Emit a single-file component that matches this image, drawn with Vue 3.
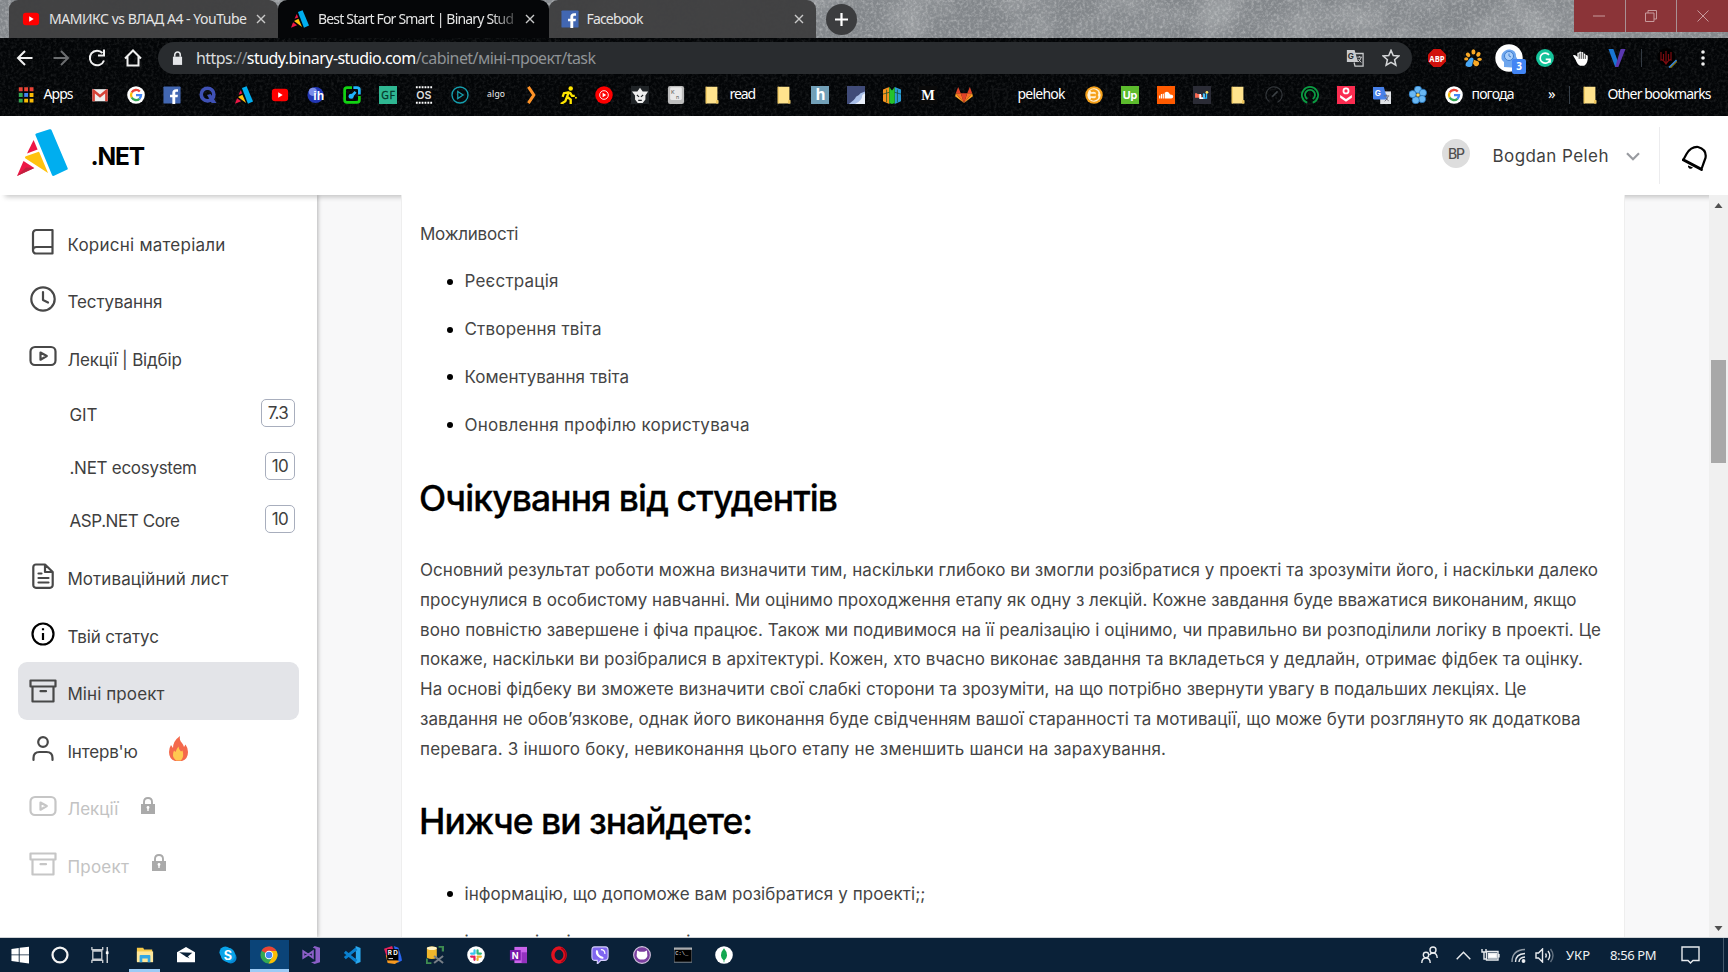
<script setup>
// Spreads letter spacing so that a run of text fills the given width.
const vFit = {
  mounted(el, { value }) {
    el.style.letterSpacing = '0px'
    const n = el.textContent.length
    const w = el.getBoundingClientRect().width
    el.style.letterSpacing = (value - w) / Math.max(n - 1, 1) + 'px'
  },
}

const google = `<circle cx="10" cy="10" r="9.800" fill="#fff"/><g fill="none" stroke-width="2.600"><path d="M14.200 6.200A5.600 5.600 0 0 0 5.200 7.200" stroke="#ea4335"/><path d="M5.200 7.200a5.600 5.600 0 0 0 0 5.600" stroke="#fbbc05"/><path d="M5.200 12.800a5.600 5.600 0 0 0 8.600 1.400" stroke="#34a853"/><path d="M13.800 14.200a5.600 5.600 0 0 0 1.800-4.100H10" stroke="#4285f4"/></g>`
const youtube = `<rect x="1" y="3" width="18" height="14" rx="3.400" fill="#f00"/><path d="M8 7l5 3-5 3z" fill="#fff"/>`
const facebook = `<rect x="0.5" y="0.5" width="19" height="19" rx="1" fill="#4267b2"/><path d="M13.600 20v-7.400h2.600l.4-3h-3V7.900c0-.9.4-1.400 1.500-1.400h1.600V3.700c-.5-.1-1.300-.2-2.200-.2-2.500 0-4.100 1.400-4.100 4v2.100H7.800v3h2.600V20z" fill="#fff"/>`
const binary = `<path d="M7.700 2.200 12.900.2 20 17.300 14.400 19.700z" fill="#00aeef"/><path d="M6.400 4.400 8 8.300 4 9.600z" fill="#ed1846"/><path d="M3.400 12.100 8.300 9.800 12.300 18.800z" fill="#ffc20e"/><path d="M2.300 13.700 6.800 16.900 0 19.800z" fill="#ed1846"/>`
const folder = `<path d="M3 .8h13v15h1v3.600H3z" fill="#ffe38d"/><path d="M3 .8h1.200v18.600H3zM14.500 15.800h2.500v3.600h-2.500z" fill="#efc65c"/>`

const icons = {
  google, youtube, facebook, binary, folder,
  apps: `<path d="M2 1.500h4.300v4.300H2zM8 1.500h4.300v4.300H8zM14 1.500h4.300v4.300H14z" fill="#ea4335"/><path d="M2 7.800h4.300v4.300H2zM2 14.100h4.300v4.300H2z" fill="#34a853"/><path d="M8 7.800h4.300v4.300H8z" fill="#4285f4"/><path d="M14 7.800h4.300v4.300H14zM8 14.100h4.300v4.300H8zM14 14.100h4.300v4.300H14z" fill="#fbbc05"/>`,
  gmail: `<path d="M1.500 3.500h17v13.500h-17z" fill="#eee"/><path d="M1.500 17V3.500h1.500l7 6 7-6h1.500V17h-2.800V8.200L10 13 4.300 8.200V17z" fill="#d54338"/>`,
  q: `<circle cx="9.500" cy="9.500" r="7" fill="none" stroke="#3f51b5" stroke-width="4"/><path d="M9 10l4-1 6.500 10H14z" fill="#3f51b5"/>`,
  ih: `<circle cx="9.500" cy="10" r="9" fill="#2338b5"/><circle cx="6.500" cy="6.500" r="4.500" fill="#9fb0ff" opacity=".7"/><text x="7" y="15" font-family="Liberation Sans" font-weight="700" font-size="13.500" fill="#fff" textLength="12">ih</text>`,
  edit: `<path d="M10 1.800H4.500Q1.800 1.800 1.800 4.500v11q0 2.700 2.700 2.700h11q2.700 0 2.700-2.700V11" fill="none" stroke="#12d312" stroke-width="3"/><path d="M11.500 1.800h4q2.700 0 2.700 2.700v5M8.500 12.500 14 6.500" fill="none" stroke="#21b4ff" stroke-width="3"/><circle cx="9" cy="11.500" r="2.800" fill="#21b4ff"/>`,
  gf: `<rect width="20" height="20" fill="#2fb792"/><text x="2.500" y="14.200" font-family="Open Sans" font-size="11.500" fill="#06382c" stroke="#06382c" stroke-width=".4" textLength="15">GF</text>`,
  os: `<path d="M1 1.500h18M1 18.500h18" stroke="#fff" stroke-width="2.200" stroke-dasharray="2 1.200"/><text x="1.500" y="14.300" font-family="Inter" font-weight="600" font-size="11.500" fill="#ddd" textLength="17" lengthAdjust="spacingAndGlyphs">OS</text>`,
  play: `<circle cx="10" cy="10" r="8.900" fill="none" stroke="#169fae" stroke-width="1.500"/><path d="M7.500 6l6 4-6 4z" fill="none" stroke="#169fae" stroke-width="1.400"/>`,
  algo: `<text x="0" y="12" font-family="Noto Sans" font-size="9.500" fill="#eee" textLength="20">algo</text>`,
  angle: `<path d="M6 1l6 9-6 9" fill="none" stroke="#ff9327" stroke-width="3.400"/>`,
  walk: `<rect width="20" height="20" fill="#060606"/><circle cx="13" cy="2.800" r="2.500" fill="#ffe600"/><path d="M11 6 9 12l4 3v5M9 12l-2 5-5 3M10.500 7l-5 1-1.500 4M12 7l2.500 4h3" fill="none" stroke="#ffe600" stroke-width="2.600"/><circle cx="18.800" cy="13" r="1.100" fill="#ffe600"/>`,
  ytm: `<circle cx="10" cy="10" r="9.700" fill="#f00"/><circle cx="10" cy="10" r="4.800" fill="none" stroke="#fff" stroke-width="1"/><path d="M8.500 7.500l4 2.500-4 2.500z" fill="#fff"/>`,
  goat: `<rect width="20" height="20" fill="#202427"/><path d="M1 6l6 0 3-4 3 4 6 0-3 4.500v4.500l-3 4H7.500l-3-4v-4.500z" fill="#eee"/><path d="M6.500 10l2.500 2M13.500 10 11 12M8 16h4" stroke="#202427" stroke-width="1.200"/>`,
  key: `<rect x="1" y="0" width="18" height="20" rx="2.500" fill="#bdbdbd"/><rect x="3.500" y="1.500" width="13" height="14" rx="1.500" fill="#e9e9e9"/><text x="4.500" y="8.500" font-family="Inter" font-size="6" fill="#555">K</text><text x="10" y="14" font-family="Inter" font-size="6" fill="#555">n</text>`,
  h: `<rect width="20" height="20" fill="#72a0b8"/><text x="5" y="16" font-family="Open Sans" font-weight="700" font-size="17" fill="#fff">h</text>`,
  wave: `<rect width="20" height="20" fill="#404b78"/><path d="M2 20q7-5 8-8 3-1 5-4l5-2v14z" fill="#a9bfe8"/><path d="M9 20q8-4 8-10l3-2v12z" fill="#e9effa"/>`,
  shirt: `<path d="M7 1 0 4v13l7 3z" fill="#f7941d"/><path d="M13 1l7 3v13l-7 3z" fill="#2a9bd7"/><path d="M7 1l3 4 3-4v18l-3 1-3-1z" fill="#25c32b"/><path d="M0 9l7-2M13 7l7 2M4 4v14M16 4v14" stroke="#174a2b" stroke-width=".8"/>`,
  m: `<rect width="20" height="20" fill="#0a0a0a"/><text x="2.500" y="15.500" font-family="Liberation Serif" font-weight="700" font-size="16" fill="#fff">M</text>`,
  gitlab: `<path d="M10 19 6.400 8h7.200z" fill="#e24329"/><path d="M10 19 6.400 8H.9zM10 19l3.600-11h5.500z" fill="#fc6d26"/><path d="M.9 8l-.8 3.500L10 19zM19.100 8l.8 3.500L10 19z" fill="#fca326"/><path d="M.9 8 3.500 1l2.900 7zM19.100 8l-2.600-7-2.900 7z" fill="#e24329"/>`,
  github: `<path d="M6 18C0 15 1 4 5 3l2 1h6l2-1c4 2 5 12-1 15" fill="none" stroke="#111315" stroke-width="2"/>`,
  coin: `<circle cx="10" cy="10" r="9.700" fill="#f6a11b"/><circle cx="10" cy="10" r="7.400" fill="#fff3d8"/><path d="M6.500 6q3-2 6 0 2 2 0 4 2 2 0 4-3 2-6 0M6 10h5" fill="none" stroke="#f6a11b" stroke-width="2.600"/>`,
  up: `<rect width="20" height="20" fill="#5cbb2d"/><text x="2" y="14" font-family="Inter" font-weight="700" font-size="12" fill="#fff" textLength="16">Up</text>`,
  cloud: `<rect width="20" height="20" fill="#ff5a00"/><path d="M8.500 14V7.500q4-3 6 2 3.500 0 3.500 2.300T15.500 14z" fill="#fff"/><path d="M7 8.500V14M5 9v5M3 10.500V14" stroke="#fff" stroke-width="1.300"/>`,
  w: `<rect width="20" height="20" fill="#2b2c36"/><path d="M3.500 8v5M6 9v4M8.500 10v3" stroke="#ff6c54" stroke-width="2.400"/><path d="M8 9v4.500h4V9" stroke="#fff" stroke-width="2" fill="none"/><path d="M12 8v5.500h3V7" stroke="#26b9ff" stroke-width="1.500" fill="none"/><circle cx="15.500" cy="7" r="1.500" fill="#ffe15c"/>`,
  gauge: `<circle cx="10" cy="10" r="9" fill="none" stroke="#32363a" stroke-width="1.300" stroke-dasharray="46 12" transform="rotate(130 10 10)"/><path d="M8 12l6-6" stroke="#3d4246" stroke-width="1.800"/>`,
  rings: `<path d="M7 18.500A9 9 0 1 1 13 18.500M7 14.500a5.500 5.500 0 1 1 6 0" fill="none" stroke="#0b9a42" stroke-width="2"/>`,
  heart: `<rect width="20" height="20" fill="#fb2c50"/><circle cx="10" cy="5.500" r="2.800" fill="none" stroke="#fff" stroke-width="2"/><path d="M3.500 10l6.500 4.500 6.500-4.500v3L10 17.500 3.500 13z" fill="#fff"/>`,
  trans: `<rect x="8" y="6" width="12" height="14" fill="#dfe2e6"/><path d="M0 1h12l4 14H1.500Q0 15 0 13.500z" fill="#4680e8"/><text x="2" y="11" font-family="Inter" font-weight="700" font-size="9" fill="#fff">G</text><path d="M12 11h6M15 9.500v2M17 11q-1 4-4 6M14 13q1 2 3.500 3.500" stroke="#667" fill="none"/>`,
  flower: `<g fill="#69b8f4" stroke="#226eb5" stroke-width=".8"><circle cx="10" cy="4" r="4"/><circle cx="15.500" cy="7.500" r="4"/><circle cx="14.500" cy="14.500" r="4"/><circle cx="7.500" cy="15.800" r="4"/><circle cx="4" cy="9" r="4"/></g><circle cx="10" cy="10" r="2" fill="#ffd65b"/>`,
  abp: `<path d="M6 0h8l6 6v8l-6 6H6l-6-6V6z" fill="#d1110c"/><text x="1.500" y="14" font-family="Open Sans" font-weight="700" font-size="10.500" fill="#fff" textLength="17" lengthAdjust="spacingAndGlyphs">ABP</text>`,
  paw: `<g fill="#f9a825"><ellipse cx="10.500" cy="3.200" rx="2.200" ry="3"/><ellipse cx="16" cy="6" rx="2.200" ry="2.800" transform="rotate(35 16 6)"/><ellipse cx="17.300" cy="11.500" rx="2.600" ry="1.800"/><ellipse cx="4.500" cy="6.500" rx="2.200" ry="2.800" transform="rotate(-40 4.500 6.500)"/><path d="M11 12l5 2q2 3-1 5-3 1-5-3z"/><ellipse cx="2.500" cy="11" rx="2.300" ry="1.700"/></g><path d="M8 9.500q4 0 2 4l-1 5q-3 3-7 0-1-3 2-5 2-3 4-4z" fill="#47a6f5"/>`,
  gram: `<circle cx="10" cy="10" r="9.900" fill="#15c39a"/><path d="M14.500 6.500A5.600 5.600 0 1 0 15.300 12.500M10.800 11.500h4.700v3.800" fill="none" stroke="#fff" stroke-width="1.900"/>`,
  hand: `<path d="M1 7q3-1 5 2V4.500q1-1.500 2 0V3.500q1-1.500 2.300 0V4q1-1.500 2.300 0v1.500q1-1.200 2.200 0V7q1.500-1 2.700.500v4q-1 6-4 7H9q-3-1-5-6.500z" fill="#fff"/><path d="M8 5v6M10.300 4v7M12.600 5v6M14.800 7v4" stroke="#222" stroke-width=".9"/>`,
  v: `<path d="M.5 0h5.500l5 14-1.500 6H8z" fill="#1976d2"/><path d="M19.500 0H14L8 20h3.500z" fill="#5a38b0"/>`,
  trident: `<circle cx="9.500" cy="9" r="9" fill="#000"/><path d="M4 4v8q2-1 5 4 3-5 5-4V4M6.500 6v6M11.500 6v6M9 3v13" fill="none" stroke="#7d0b10" stroke-width="1.200"/><path d="M12 19.500 19.500 12" stroke="#3d8be0" stroke-width="1.400"/><path d="M13.200 20.200 20.400 13" stroke="#e0c21b" stroke-width=".9"/>`,
  gtrans: `<path d="M9 5h10v14H10l-1-4" fill="none" stroke="#c8cacc" stroke-width="1.400"/><path d="M1 1h8.500l4 13.500H1z" fill="#c8cacc"/><text x="2" y="11" font-family="Inter" font-weight="700" font-size="9" fill="#292c2f">G</text><path d="M12.500 9h5M15 8v1M17 9q-1 3.500-3.500 5.500M14 11q1 2 3 4" stroke="#c8cacc" fill="none" stroke-width="1.100"/>`,
  star: `<path d="M10 1.500l2.500 5.800 6.200.500-4.700 4.100 1.400 6.100-5.400-3.200L4.600 18 6 11.900 1.300 7.800l6.200-.500z" fill="none" stroke="#d4d6d8" stroke-width="1.700"/>`,
  // taskbar
  win: `<path d="M.5 3.300 8.600 2.200v7.200H.5zM9.600 2 20 .7v8.700H9.600zM.5 10.400h8.100v7.300L.5 16.700zM9.600 10.400H20v9L9.600 18z" fill="#fff"/>`,
  cortana: `<circle cx="10" cy="10" r="8.300" fill="none" stroke="#f4f4f4" stroke-width="2.500"/>`,
  view: `<path d="M1 1v3h12V1M1 19v-3h12v3M2 5.500h10v9H2z" fill="none" stroke="#c7ccd1" stroke-width="1.500"/><path d="M18 1v18" stroke="#fff" stroke-width="1.300"/><path d="M16.500 6h3v3h-3z" fill="#fff"/>`,
  files: `<path d="M1 2h7l1 2h9v13H1z" fill="#f7c948"/><path d="M1 6h18v12H1z" fill="#ffe79a"/><path d="M4 18v-7q0-1 1-1h10q1 0 1 1v7h-3v-4H7v4z" fill="#35a7e3"/>`,
  mail: `<path d="M0 7 10 1l10 6v11H0z" fill="#fff"/><path d="M2.500 7l14.500.500-6 5z" fill="#0a2138"/><path d="M9 11l5 3-3-4" fill="#0a2138"/>`,
  skype: `<circle cx="7" cy="7" r="6.500" fill="#0aa3e8"/><circle cx="13" cy="13" r="6.500" fill="#0686d2"/><circle cx="10" cy="10" r="8" fill="#0aa3e8"/><text x="5.300" y="15.300" font-family="Inter" font-weight="700" font-size="14" fill="#fff">S</text>`,
  chrome: `<circle cx="10" cy="10" r="9.500" fill="#34a853"/><path d="M10 10 1.800 5.200A9.500 9.500 0 0 1 18.300 5.500z" fill="#ea4335"/><path d="M10 5.500h8.300A9.500 9.500 0 0 1 9.500 19.500L14 12z" fill="#fbbc05"/><circle cx="10" cy="10" r="4.600" fill="#fff"/><circle cx="10" cy="10" r="3.600" fill="#4285f4"/>`,
  vs: `<path d="M14 0l6 2v16l-6 2-4-2 5-1V3l-3-1z" fill="#8b5fc7"/><path d="M1.500 6v7l5.500-3.500 5 3.500V6L7 9.500z" fill="none" stroke="#8b5fc7" stroke-width="2.200"/>`,
  code: `<path d="M14 0l5.500 2.300v15.400L14 20z" fill="#2aa8ee"/><path d="M15 3 2 13.500M15 17 2 6.500" stroke="#0a80cf" stroke-width="3.400"/><path d="M14 6v8L9 10z" fill="#0a2138"/>`,
  rider: `<path d="M0 3 9 0l3 9-8 6z" fill="#e6245c"/><path d="M11 0l5 2 3 9 1 5-5 3z" fill="#2866f2"/><path d="M2 10l2 9 8 1 5-3z" fill="#f79a20"/><rect x="3.500" y="3.500" width="12.500" height="12.500" fill="#000"/><text x="4.300" y="10.500" font-family="Inter" font-weight="700" font-size="7" fill="#fff" textLength="11">RD</text><path d="M5 14h5" stroke="#fff"/>`,
  sql: `<path d="M14 0h6v6h-2.500V2H14zM0 14h2v4h4v2H0z" fill="#3e8c50"/><path d="M1 2q5.500-3 11 0v11q-5.500 3-11 0z" fill="#f1b72c"/><ellipse cx="6.500" cy="2.500" rx="5.500" ry="2" fill="#fff3c5"/><path d="M9 11l10 8M19 11 9 19" stroke="#777e86" stroke-width="2.200"/>`,
  slack: `<circle cx="10" cy="10" r="9.800" fill="#fff"/><g stroke-width="2.500" stroke-linecap="round"><path d="M8.400 4.800v3.500M4.600 8.400h3.700" stroke="#36c5f0"/><path d="M11.700 4.800v3.500M11.700 8.400h3.700" stroke="#2eb67d"/><path d="M8.300 11.700v3.700M4.600 11.700h2" stroke="#e01e5a"/><path d="M11.700 11.700h3.700M11.700 13.500v2" stroke="#ecb22e"/></g>`,
  note: `<path d="M6 1h14v18H6z" fill="#ca64ea"/><path d="M14 7h6v12h-6z" fill="#9332bf"/><path d="M1 4.500h12v11.500H1z" fill="#7719aa"/><text x="3" y="14" font-family="Inter" font-weight="700" font-size="10" fill="#fff">N</text>`,
  opera: `<ellipse cx="10" cy="10" rx="6.800" ry="7.800" fill="none" stroke="#e1121f" stroke-width="3.800"/><path d="M12.500 2q5 3 5 8t-5 8" fill="none" stroke="#a70014" stroke-width="1.600"/>`,
  viber: `<path d="M4 1h12q3 0 3 4v7q0 4-4 4h-4l-4 4v-4H4q-3 0-3-4V5q0-4 3-4z" fill="#8067f0" stroke="#d6cffb" stroke-width="1.200"/><path d="M6 4.500q2 0 2 2.500 0 3 3.500 4.500 3 .500 2.500 2-2 2-6-1.500T6 4.500z" fill="#fff"/><path d="M11 4q4.500 0 4.500 5" stroke="#fff" fill="none" stroke-width="1.300"/>`,
  ghd: `<circle cx="10" cy="10" r="9.300" fill="#7b3fa0" stroke="#d1c4dc" stroke-width="1.200"/><path d="M4.500 5l3 1.500h5l3-1.500.5 6q-1 4-6 4t-6-4z" fill="#fff"/>`,
  cmd: `<rect x="0" y="2" width="20" height="16" fill="#000" stroke="#8b9199" stroke-width="1"/><path d="M0 2.500h20v1.500H0z" fill="#d6d9dc"/><text x="1.500" y="10.500" font-family="Liberation Mono" font-size="6" fill="#eee">C:\\_</text>`,
  mongo: `<circle cx="10" cy="10" r="9.800" fill="#fff"/><path d="M10 2.500q3.600 4 3.400 8-.4 3.500-3 5.500v2h-.8v-2q-2.800-2-3-5.500Q6.400 6.500 10 2.500z" fill="#13a750"/>`,
}

const bookmarks = [
  { i: 'apps', t: 'Apps', w: 38, f: 30 }, { i: 'gmail' }, { i: 'google' }, { i: 'facebook' }, { i: 'q' }, { i: 'binary' }, { i: 'youtube' },
  { i: 'ih' }, { i: 'edit' }, { i: 'gf' }, { i: 'os' }, { i: 'play' }, { i: 'algo' }, { i: 'angle' }, { i: 'walk' }, { i: 'ytm' }, { i: 'goat' },
  { i: 'key' }, { i: 'folder', t: 'read', w: 36, f: 26.5 }, { i: 'folder' }, { i: 'h' }, { i: 'wave' }, { i: 'shirt' }, { i: 'm' }, { i: 'gitlab' },
  { i: 'github', t: 'pelehok', w: 58, f: 48 }, { i: 'coin' }, { i: 'up' }, { i: 'cloud' }, { i: 'w' }, { i: 'folder' }, { i: 'gauge' },
  { i: 'rings' }, { i: 'heart' }, { i: 'trans' }, { i: 'flower' }, { i: 'google', t: 'погода', w: 70.5, f: 43 },
]

const book = `<path d="M7.500 3H23.500V26.500H7a3 3 0 0 1-3-3V6.300A3.300 3.300 0 0 1 7.500 3zM4 23q0-3 3.500-3h16"/>`
const video = `<rect x="1.500" y="5" width="25" height="18" rx="4.500"/><path d="M11.500 10.500l6.300 3.500-6.300 3.700z"/>`
const box = `<path d="M1.500 3.500h25v6h-25zM3.500 9.500h21v15h-21zM11.500 14.200h5.500"/>`
const menu = [
  { t: 'Корисні матеріали', f: 158, g: book },
  { t: 'Тестування', f: 95, g: `<circle cx="14" cy="14" r="11.700"/><path d="M14 7v8l5 2.500"/>` },
  { t: 'Лекції | Відбір', f: 114.5, g: video },
]
const subs = [
  { t: 'GIT', f: 28, s: '7.3' },
  { t: '.NET ecosystem', f: 127.5, s: '10' },
  { t: 'ASP.NET Core', f: 110.5, s: '10' },
]
const menu2 = [
  { t: 'Мотиваційний лист', f: 161, g: `<path d="M16 2.500H7A2.700 2.700 0 0 0 4.300 5v18A2.700 2.700 0 0 0 7 25.800h14a2.700 2.700 0 0 0 2.700-2.700V10zM16 2.500V10h7.700M9.500 11.500h3M9.500 16h10M9.500 20.500h10"/>` },
  { t: 'Твій статус', f: 91.5, c: 'dark', g: `<circle cx="14" cy="14" r="10.500"/><path d="M14 13v7M14 8.200v2"/>` },
  { t: 'Міні проект', f: 97, c: 'active', g: box },
  { t: "Інтерв'ю", f: 70.5, fire: true, g: `<circle cx="14" cy="7" r="4.800"/><path d="M4.500 25v-2q0-6 6-6h7q6 0 6 6v2"/>` },
  { t: 'Лекції', f: 51, c: 'off', lock: true, g: video },
  { t: 'Проект', f: 61.5, c: 'off', lock: true, g: box },
]

const feats = [
  ['Реєстрація', 94], ['Створення твіта', 137], ['Коментування твіта', 164.5], ['Оновлення профілю користувача', 285],
]
const lines = [
  ['Основний результат роботи можна визначити тим, наскільки глибоко ви змогли розібратися у проекті та зрозуміти його, і наскільки далеко', 1178],
  ['просунулися в особистому навчанні. Ми оцінимо проходження етапу як одну з лекцій. Кожне завдання буде вважатися виконаним, якщо', 1156.5],
  ['воно повністю завершене і фіча працює. Також ми подивимося на її реалізацію і оцінимо, чи правильно ви розподілили логіку в проекті. Це', 1181],
  ['покаже, наскільки ви розібралися в архітектурі. Кожен, хто вчасно виконає завдання та вкладеться у дедлайн, отримає фідбек та оцінку.', 1163],
  ['На основі фідбеку ви зможете визначити свої слабкі сторони та зрозуміти, на що потрібно звернути увагу в подальших лекціях. Це', 1106.5],
  ['завдання не обов’язкове, однак його виконання буде свідченням вашої старанності та мотивації, що може бути розглянуто як додаткова', 1160.5],
  ['перевага. З іншого боку, невиконання цього етапу не зменшить шанси на зарахування.', 746],
]
const tasks = ['win', 'cortana', 'view', 'files', 'mail', 'skype', 'chrome', 'vs', 'code', 'rider', 'sql', 'slack', 'note', 'opera', 'viber', 'ghd', 'cmd', 'mongo']
</script>

<template>
  <div class="screen">
    <div class="browser">
      <svg class="grain" width="1728" height="116">
        <filter id="gn" x="0" y="0" width="100%" height="100%"><feTurbulence type="fractalNoise" baseFrequency=".35" numOctaves="3" seed="4" /><feColorMatrix values="0 0 0 0 1  0 0 0 0 1  0 0 0 0 1  1.8 0 0 0 -.75" /></filter>
        <filter id="gl" x="0" y="0" width="100%" height="100%"><feTurbulence type="fractalNoise" baseFrequency=".02" numOctaves="3" seed="9" /><feColorMatrix values="0 0 0 0 1  0 0 0 0 1  0 0 0 0 1  2.4 0 0 0 -.9" /></filter>
        <rect width="1728" height="38" fill="#83878b" />
        <rect width="1728" height="38" filter="url(#gl)" opacity=".18" />
        <rect width="1728" height="38" filter="url(#gn)" opacity=".36" />
        <rect y="38" width="1728" height="78" fill="#030507" />
        <rect y="38" width="1728" height="78" filter="url(#gn)" opacity=".11" />
      </svg>
      <div class="tabs">
        <div class="tab t1"><svg class="fav" viewBox="0 0 20 20" v-html="icons.youtube" /><span class="tt"><span v-fit="198">МАМИКС vs ВЛАД А4 - YouTube</span></span><svg class="cl" viewBox="0 0 10 10"><path d="M1 1l8 8M9 1L1 9" /></svg></div>
        <div class="tab t2"><svg class="fav" viewBox="0 0 20 20" v-html="icons.binary" /><span class="tt fade"><span v-fit="196">Best Start For Smart | Binary Stud</span></span><svg class="cl" viewBox="0 0 10 10"><path d="M1 1l8 8M9 1L1 9" /></svg></div>
        <div class="tab t3"><svg class="fav" viewBox="0 0 20 20" v-html="icons.facebook" /><span class="tt"><span v-fit="57">Facebook</span></span><svg class="cl" viewBox="0 0 10 10"><path d="M1 1l8 8M9 1L1 9" /></svg></div>
        <svg class="plus" viewBox="0 0 31 31"><circle cx="15.500" cy="15.500" r="15.500" fill="#3c3d3f" /><path d="M15.500 9v13M9 15.500h13" stroke="#fff" stroke-width="2.200" /></svg>
        <div class="wc">
          <div><svg viewBox="0 0 12 12"><path d="M0 6h12" /></svg></div>
          <div><svg viewBox="0 0 12 12"><path d="M.5 3h8.500v8.500H.5zM3 3V.5h8.500V9H9" /></svg></div>
          <div><svg viewBox="0 0 12 12"><path d="M.5.5l11 11M11.500.5l-11 11" /></svg></div>
        </div>
      </div>
      <div class="nav">
        <svg class="nb" viewBox="0 0 20 20"><path d="M17.500 10H3.500M10 3l-7 7 7 7" /></svg>
        <svg class="nb dim" viewBox="0 0 20 20"><path d="M2.500 10h14M10 3l7 7-7 7" /></svg>
        <svg class="nb" viewBox="0 0 20 20"><path d="M15.500 5A7.300 7.300 0 1 0 17 12.500M17 1.500v6h-6" /></svg>
        <svg class="nb" viewBox="0 0 20 20"><path d="M2 10.500l8-8 8 8M4.500 8.500v9h11v-9" /></svg>
        <div class="url">
          <svg class="lk" viewBox="0 0 12 16"><path d="M1 6h10v9H1z" fill="#e4e6e8" /><path d="M3 6V4a3 3 0 0 1 6 0v2" fill="none" stroke="#e4e6e8" stroke-width="1.700" /></svg>
          <span v-fit="400" class="addr"><i>https</i>://<b>study.binary-studio.com</b>/cabinet/міні-проект/task</span>
          <svg class="ub" viewBox="0 0 20 20" v-html="icons.gtrans" />
          <svg class="ub" viewBox="0 0 20 20" v-html="icons.star" />
        </div>
        <div class="ext">
          <svg v-for="n in ['abp', 'paw']" :key="n" viewBox="0 0 20 20" v-html="icons[n]" />
          <div class="head"><svg viewBox="0 0 28 28"><circle cx="14" cy="14" r="13.700" fill="#fff" /><path d="M9 23v-5q-4-3-2-8 3-5 8-4.500 6 .5 6 7l2 4h-2v4h-4v3z" fill="#6ea6ee" /><circle cx="14" cy="12" r="4.500" fill="#a9cefa" stroke="#3f7ed0" /><path d="M14 9.500V12l2 1" stroke="#3f7ed0" fill="none" /></svg><em>3</em></div>
          <svg v-for="n in ['gram', 'hand', 'v']" :key="n" viewBox="0 0 20 20" v-html="icons[n]" />
        </div>
        <s class="vd" />
        <svg class="tri" viewBox="0 0 20 20" v-html="icons.trident" />
        <svg class="dots" viewBox="0 0 4 16"><circle cx="2" cy="2" r="1.800" /><circle cx="2" cy="8" r="1.800" /><circle cx="2" cy="14" r="1.800" /></svg>
      </div>
      <div class="marks">
        <template v-for="(b, k) in bookmarks" :key="k">
          <div class="bi"><svg viewBox="0 0 20 20" v-html="icons[b.i]" /></div>
          <div v-if="b.t" class="bt" :style="{ width: b.w + 'px' }"><span v-fit="b.f">{{ b.t }}</span></div>
        </template>
        <div class="more">»</div>
        <s class="vd2" />
        <div class="bi"><svg viewBox="0 0 20 20" v-html="icons.folder" /></div>
        <div class="bt"><span v-fit="104">Other bookmarks</span></div>
      </div>
    </div>

    <div class="page">
      <header>
        <svg class="logo" viewBox="0 0 51 47"><path d="M18.500 6.200q-.5-1.200.8-1.700L32.500.3q1.500-.5 2 .8L50.600 39q.5 1.300-.8 1.800L37 46.800q-1.500.5-2-.8z" fill="#00aeef" /><path d="M16.600 11l4 9.500L10 24.600z" fill="#ed1846" /><path d="M8.200 29.300q-.8-1.500.7-2L21 23q1-.5 1.500.7L31 44z" fill="#ffc20e" /><path d="M6.500 32l10.800 7L0 47z" fill="#ed1846" /><path d="M17.300 39L0 47l9-8.500z" fill="#c1203e" /></svg>
        <strong><span v-fit="54.5">.NET</span></strong>
        <div class="av"><span v-fit="17">BP</span></div>
        <div class="nm"><span v-fit="116">Bogdan Peleh</span></div>
        <svg class="chev" viewBox="0 0 14 9"><path d="M1 1.200l6 6 6-6" /></svg>
        <s class="hd" />
        <svg class="bell" viewBox="0 0 26 26"><path d="M1.500 14.500 4.500 9Q9 1.500 16 2q9 2.500 7.500 11l-1.500 4-2.500 7z" fill="none" stroke="#000" stroke-width="2.200" /><path d="M0 14.500 20.500 25.500" stroke="#000" stroke-width="2" /><path d="M6 20.500l5 2q-2 2.200-4 .7-1.300-1-1-2.700z" /></svg>
      </header>
      <div class="body">
        <aside>
          <div v-for="m in menu" :key="m.t" class="item"><svg class="ic" viewBox="0 0 28 28" v-html="m.g" /><span class="lb"><span v-fit="m.f">{{ m.t }}</span></span></div>
          <div class="subs">
            <div v-for="m in subs" :key="m.t" class="sub"><span class="sl"><span v-fit="m.f">{{ m.t }}</span></span><span class="bdg">{{ m.s }}</span></div>
          </div>
          <div v-for="m in menu2" :key="m.t" class="item" :class="m.c">
            <svg class="ic" viewBox="0 0 28 28" v-html="m.g" /><span class="lb"><span v-fit="m.f">{{ m.t }}</span></span>
            <svg v-if="m.fire" class="fire" viewBox="0 0 19 25"><path d="M11 0q-1 4 2 7 1.500 2 2 4l1.500-2.500Q19 12 19 16q0 7-6 9H6q-6-2-6-9 0-4 2-7l2 3Q4 5 11 0z" fill="#f4694c" /><path d="M9.500 10.500q0 3 2.500 5l1.500-1q2 6-1.500 10H7q-5-4-2-10l1.500 1.500q1-3 3-5.500z" fill="#ffc850" /></svg>
            <svg v-if="m.lock" class="lock" viewBox="0 0 14 17"><path d="M0 7h14v10H0z" /><path d="M3 7V5q0-4 4-4t4 4v2" fill="none" stroke="#aaa" stroke-width="1.900" /><circle cx="7" cy="10.500" r="1.400" fill="#fff" /><path d="M6.300 11h1.400v3H6.300z" fill="#fff" /></svg>
          </div>
        </aside>
        <main>
          <p><span v-fit="98.5">Можливості</span></p>
          <ul><li v-for="x in feats" :key="x[0]"><span v-fit="x[1]">{{ x[0] }}</span></li></ul>
          <h2><span v-fit="419">Очікування від студентів</span></h2>
          <p class="para"><template v-for="x in lines" :key="x[0]"><span v-fit="x[1]">{{ x[0] }}</span><br /></template></p>
          <h2><span v-fit="334">Нижче ви знайдете:</span></h2>
          <ul><li><span v-fit="461">інформацію, що допоможе вам розібратися у проекті;;</span></li><li class="cut"><span v-fit="106">інструкцію зі</span> <span v-fit="147">створення гілки</span></li></ul>
        </main>
        <div class="scroll">
          <svg viewBox="0 0 8 5"><path d="M0 5l4-5 4 5z" /></svg>
          <div class="thumb" />
          <svg class="dn" viewBox="0 0 8 5"><path d="M0 0l4 5 4-5z" /></svg>
        </div>
      </div>
    </div>

    <footer>
      <div v-for="n in tasks" :key="n" class="tk" :class="n"><svg viewBox="0 0 20 20" v-html="icons[n]" /></div>
      <div class="tray">
        <svg class="ppl" viewBox="0 0 17 18"><circle cx="5" cy="9" r="2.700" /><path d="M.8 17q0-5 4.200-5t4.200 5" /><circle cx="12" cy="4" r="3" /><path d="M8.500 9q1-2 3.500-2 4 0 4.200 5" /></svg>
        <svg class="up" viewBox="0 0 15 9"><path d="M.7 8.200l6.800-7 6.800 7" /></svg>
        <svg class="bat" viewBox="0 0 19 13"><path d="M5.500 2.500h11.500v8.500H5.500zM18 5v3.500" /><path d="M7.500 4.500h8V9h-8z" fill="#fff" /><path d="M1 0v3h4V0M3 3v7h2" /></svg>
        <svg class="wifi" viewBox="0 0 15 15"><path d="M1 14Q1 2 14 1.500" opacity=".6" /><path d="M4.500 14q0-8 9.500-8.500M8 14q0-4.500 6-5" /><circle cx="12.500" cy="13" r="1.200" fill="#fff" /></svg>
        <svg class="vol" viewBox="0 0 19 15"><path d="M1 5h2.500l4-4v13l-4-4H1zM10.500 5.500q1.500 2 0 4M13 3q3.500 4.500 0 9" /><path d="M15.500 1q5 6.500 0 13" opacity=".4" /></svg>
        <span class="lang"><span v-fit="24">УКР</span></span>
        <span class="time"><span v-fit="46.5">8:56 PM</span></span>
        <svg class="ntf" viewBox="0 0 19 18"><path d="M1 1h17v13.500h-6l-2.500 2.500-2.500-2.500H1z" /></svg>
      </div>
    </footer>
  </div>
</template>

<style>
html, body { overflow: hidden; }
</style>
<style scoped>
.screen { width: 1728px; height: 972px; overflow: hidden; display: flex; flex-direction: column; font-family: Inter, "Noto Sans", sans-serif; color: #3f3f3f; background: #fff; }
.screen * { box-sizing: border-box; }
span { white-space: nowrap; }
svg { display: block; flex: none; }
.browser { position: relative; height: 116px; font-family: "Noto Sans", "Open Sans", sans-serif; }
.grain { position: absolute; inset: 0; }
.tabs, .nav, .marks { position: relative; display: flex; align-items: center; }
.tabs { height: 38px; padding-left: 9px; }
.tab { height: 38px; display: flex; align-items: center; border-radius: 9px 9px 0 0; background: rgba(62, 62, 63, .96); color: #e4e4e4; font-size: 14px; padding-left: 13px; }
.t1 { width: 269px; } .t2 { width: 271px; background: #050608; } .t3 { width: 267px; padding-left: 11.5px; }
.fav { width: 18px; height: 18px; margin-right: 9px; }
.t3 .fav { margin-right: 8px; }
.tt { width: 202px; line-height: 24px; }
.tt span { display: inline-block; }
.t1 .cl { margin-left: 5px; } .t2 .cl { margin-left: 5px; } .t3 .cl { margin-left: 5.5px; }
.fade { width: 197px; margin-right: 5px; -webkit-mask-image: linear-gradient(90deg, #000 88%, transparent 104%); mask-image: linear-gradient(90deg, #000 88%, transparent 104%); }
.cl { width: 10px; height: 10px; }
.cl path { stroke: #c9c9c9; stroke-width: 1.4; fill: none; }
.plus { width: 31px; height: 31px; margin-left: 10px; }
.wc { margin-left: auto; align-self: flex-start; display: flex; height: 32px; width: 154px; background: #8b3438; }
.wc div { flex: 1; display: flex; align-items: center; justify-content: center; border-left: 1px solid #a99094; }
.wc div:first-child { border: 0; }
.wc svg { width: 12px; height: 12px; } .wc path { fill: none; stroke: #c79a9c; stroke-width: 1; }
.nav { height: 40px; padding-left: 14.5px; }
.nb { width: 20px; height: 20px; margin-right: 16px; }
.nb path { fill: none; stroke: #f1f1f1; stroke-width: 2; } .nb.dim path { stroke: #6c6e70; }
.url { width: 1254px; height: 32px; border-radius: 16px; background: #292c2f; display: flex; align-items: center; margin-left: -.5px; padding-left: 14px; }
.lk { width: 11px; height: 15px; }
.addr { margin-left: 13px; font-size: 16px; color: #8f9396; line-height: 24px; margin-top: -1px; }
.addr i, .addr b { font-style: normal; font-weight: 400; color: #dadcde; } .addr b { color: #fff; }
.ub { width: 18px; height: 18px; margin-right: 18px; } .addr + .ub { margin-left: auto; }
.url .ub:last-child { margin-right: 12px; }
.ext { display: flex; align-items: center; margin-left: 16px; gap: 18px; }
.ext > svg { width: 18px; height: 18px; }
.head { position: relative; width: 28px; height: 28px; margin: 0 -5px; }
.head em { position: absolute; right: -3px; bottom: -2px; width: 14px; height: 15px; border-radius: 2px; background: #4285f4; color: #fff; font: 700 10px/15px "Open Sans"; text-align: center; }
.vd { width: 1px; height: 18px; background: #333a42; margin-left: 15px; }
.tri { width: 20px; height: 20px; margin-left: 15px; }
.dots { width: 4px; height: 16px; fill: #f0f0f0; margin-left: 24px; }
.marks { height: 33px; padding-left: 7.5px; color: #fff; font-size: 14px; }
.bi { width: 36px; flex: none; display: flex; justify-content: center; } .bi svg { width: 18px; height: 18px; }
.bt { line-height: 22px; flex: none; margin-top: -1px; } .bt span { display: inline-block; }
.more { width: 20px; font-size: 15px; line-height: 18px; padding-left: 6px; margin-top: -4px; }
.vd2 { width: 1px; height: 18px; background: #39424c; margin: 0 1.5px 0 7px; }

.page { height: 822px; display: flex; flex-direction: column; position: relative; overflow: hidden; border-bottom: 1px solid #cfd3d6; }
header { position: relative; z-index: 2; height: 79px; flex: none; background: #fff; box-shadow: 5px 2px 5px rgba(0, 0, 0, .22); display: flex; align-items: center; padding-left: 17px; }
.logo { width: 51px; height: 47px; margin-top: -6px; }
strong { font-size: 24.5px; font-weight: 700; color: #000; margin: 1px 0 0 22.5px; line-height: 30px; } strong span { display: inline-block; }
.av { width: 28px; height: 29px; border-radius: 50%; background: #ddd; margin: -4px 0 0 auto; display: flex; align-items: center; justify-content: center; font-size: 14px; font-weight: 500; color: #505050; }
.nm { font-size: 17px; width: 116px; margin-left: 22.5px; margin-top: 1px; } .nm span, .av span { display: inline-block; }
.chev { width: 14px; height: 9px; margin-left: 17.5px; margin-top: 1px; } .chev path { fill: none; stroke: #999ba0; stroke-width: 2.2; }
.hd { width: 1px; height: 57px; background: #ececee; margin: 0 22px 0 19px; }
.bell { width: 26px; height: 26px; margin: 4px 20px 0 0; }
.body { flex: 1; display: flex; background: #f8f8f9; min-height: 0; }
aside { width: 317px; flex: none; background: #fff; padding: 17.5px 18px 0; box-shadow: 1px 0 4px rgba(0, 0, 0, .28); position: relative; z-index: 1; font-size: 17px; }
.item { height: 57.5px; border-radius: 9px; display: flex; align-items: center; padding-left: 11px; }
.ic { width: 28px; height: 28px; } .ic :deep(*) { fill: none; stroke: #484848; stroke-width: 2.2; stroke-linejoin: round; stroke-linecap: round; }
.dark .ic :deep(*) { stroke: #000; stroke-width: 2.2; stroke-linecap: butt; }
.lb { margin: 6.5px 0 0 10.4px; line-height: 24px; } .lb span, .sl span { display: inline-block; }
.active { background: #e3e4e8; width: 281px; }
.off { color: #c3c3c3; } .off .ic :deep(*) { stroke: #c6c6c6; }
.fire { width: 19px; height: 25px; margin: -1px 0 0 31.5px; }
.lock { width: 14px; height: 17px; margin: -2px 0 0 23px; fill: #aaa; }
.subs { padding-bottom: 3px; }
.sub { height: 53.15px; display: flex; justify-content: space-between; padding: 14.2px 4px 0 51.5px; }
.sl { line-height: 24px; margin-top: 4px; }
.bdg { height: 28px; border: 1px solid #a8aebd; border-radius: 5px; padding: 0 6px; line-height: 26px; font-size: 17px; letter-spacing: -.7px; }
main { position: relative; z-index: 3; width: 1224px; margin-left: 84px; background: #fff; border-left: 1px solid #eee; border-right: 1px solid #eee; padding: 24.5px 0 0 18px; font-size: 17px; line-height: 29.75px; overflow: hidden; color: #454545; }
p { margin: 0 0 18px; } p.para { margin: 0 0 38px; }
ul { margin: 0 0 38.3px; padding: 0 0 0 44.5px; list-style: none; }
li { margin-bottom: 18px; display: flex; align-items: center; position: relative; gap: 5px; }
li::before { content: ""; position: absolute; left: -17.5px; top: 11.5px; width: 6px; height: 6px; border-radius: 50%; background: #000; }
li:last-child { margin-bottom: 0; }
li.cut { margin-top: 1.5px; }
li.cut::before { display: none; }
h2 { margin: 0 0 37.5px -1px; font-size: 35.5px; line-height: 40px; font-weight: 500; color: #000; -webkit-text-stroke: .3px #000; }
.scroll { position: relative; z-index: 4; margin-left: auto; width: 19px; background: #f0f0f0; display: flex; flex-direction: column; align-items: center; padding: 8px 0 6px; }
.scroll svg { width: 9px; height: 5px; fill: #505050; }
.thumb { width: 15px; height: 103px; background: #a8a8a8; margin-top: 152px; }
.scroll .dn { margin-top: auto; }

footer { height: 34px; background: #0a2138; display: flex; position: relative; font-family: "Noto Sans", sans-serif; color: #f0f2f4; font-size: 13px; }
.tk { width: 41.4px; display: flex; align-items: center; justify-content: center; flex: none; } .tk svg { width: 18px; height: 18px; }
.win, .cortana, .view { width: 40px; } .view { margin-right: 4.3px; }
.chrome { background: linear-gradient(#0b4478, #0b4478) center bottom / 39px 32px no-repeat; position: relative; }
.chrome::after, .files::after { content: ""; position: absolute; bottom: 0; width: 39px; height: 3px; background: #9ccbf6; }
.files { position: relative; } .files::after { width: 31px; }
.tray { margin-left: auto; display: flex; align-items: center; width: 308px; }
.tray svg { fill: none; stroke: #e8ebee; stroke-width: 1.4; }
.ppl { width: 17px; height: 18px; margin-left: 1px; } .up { width: 15px; height: 9px; margin-left: 18px; }
.bat { width: 19px; height: 13px; margin-left: 10px; } .wifi { width: 15px; height: 15px; margin-left: 11px; }
.vol { width: 19px; height: 15px; margin-left: 9px; } .lang { margin-left: 12px; width: 24px; } .time { margin-left: 20px; width: 46px; }
.lang span, .time span { display: inline-block; }
.ntf { width: 19px; height: 18px; margin-left: 25px; }
footer::after { content: ""; position: absolute; right: 4px; top: 0; width: 1px; height: 34px; background: #43576a; }
</style>
